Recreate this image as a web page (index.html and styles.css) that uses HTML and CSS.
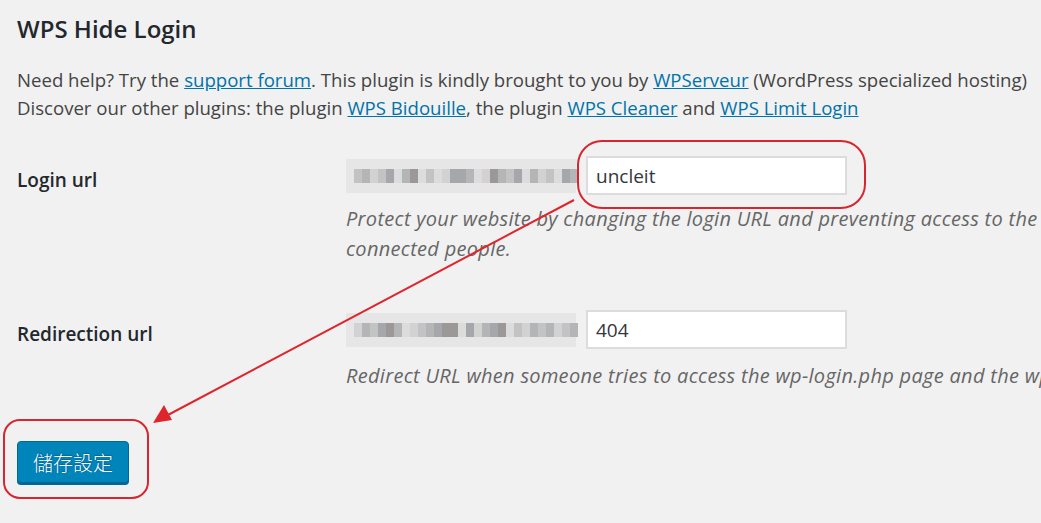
FILE: index.html
```html
<!DOCTYPE html>
<html lang="en">
<head>
<meta charset="utf-8">
<title>WPS Hide Login</title>
<link rel="stylesheet" href="styles.css">
</head>
<body>
<div class="wrap">
  <h2 class="title">WPS Hide Login</h2>
  <p class="intro">Need help? Try the <a href="#">support forum</a>. This plugin is kindly brought to you by <a href="#">WPServeur</a> (WordPress specialized hosting)<br>Discover our other plugins: the plugin <a href="#">WPS Bidouille</a>, the plugin <a href="#">WPS Cleaner</a> and <a href="#">WPS Limit Login</a></p>

  <div class="form-table">
    <div class="row row-login">
      <div class="label">Login url</div>
      <div class="field">
        <div class="inline">
          <span class="blur blur-1">
            <span class="px a"></span><span class="px b"></span><span class="px c"></span><span class="px a"></span><span class="px d"></span><span class="px gap"></span><span class="px b"></span><span class="px e"></span><span class="px gap"></span><span class="px a"></span><span class="px gap"></span><span class="px c"></span><span class="px d"></span><span class="px d"></span><span class="px b"></span><span class="px gap"></span><span class="px c"></span><span class="px e"></span><span class="px b"></span><span class="px a"></span><span class="px d"></span><span class="px gap"></span><span class="px b"></span><span class="px c"></span><span class="px a"></span><span class="px gap"></span><span class="px d"></span><span class="px b"></span>
          </span>
          <input class="text-input" type="text" value="uncleit">
        </div>
        <p class="desc">Protect your website by changing the login URL and preventing access to the wp-login.php page and the wp-admin directory to non-<br>connected people.</p>
      </div>
    </div>

    <div class="row row-redirect">
      <div class="label">Redirection url</div>
      <div class="field">
        <div class="inline">
          <span class="blur blur-2">
            <span class="px c"></span><span class="px b"></span><span class="px a"></span><span class="px d"></span><span class="px e"></span><span class="px b"></span><span class="px gap"></span><span class="px c"></span><span class="px a"></span><span class="px b"></span><span class="px d"></span><span class="px e"></span><span class="px e"></span><span class="px gap"></span><span class="px d"></span><span class="px c"></span><span class="px b"></span><span class="px d"></span><span class="px e"></span><span class="px gap"></span><span class="px a"></span><span class="px c"></span><span class="px b"></span><span class="px a"></span><span class="px b"></span><span class="px c"></span><span class="px a"></span><span class="px b"></span>
          </span>
          <input class="text-input" type="text" value="404">
        </div>
        <p class="desc">Redirect URL when someone tries to access the wp-login.php page and the wp-admin directory while not logged in.</p>
      </div>
    </div>
  </div>

  <p class="submit"><button class="button-primary" type="button">儲存設定</button></p>

  <svg class="annot" width="1041" height="523" viewBox="0 0 1041 523" aria-hidden="true">
    <rect x="578" y="141" width="287" height="67" rx="24" ry="24" fill="none" stroke="#d7262f" stroke-width="2"/>
    <rect x="4" y="420" width="144" height="78" rx="16" ry="16" fill="none" stroke="#d7262f" stroke-width="2"/>
    <line x1="574" y1="200" x2="166" y2="416" stroke="#e0242c" stroke-width="2"/>
    <polygon points="153,423 164,405 172,420" fill="#e0242c"/>
  </svg>
</div>
</body>
</html>
```

FILE: styles.css
```css
html, body {
  margin: 0;
  padding: 0;
  background: #f1f1f1;
  overflow: hidden;
}

body {
  width: 1041px;
  height: 523px;
  font-family: "Open Sans", "Noto Sans", sans-serif;
  font-size: 18.6px;
  color: #444;
}

.wrap {
  position: relative;
  padding: 0 0 0 17px;
  height: 523px;
  overflow: hidden;
}

.title {
  margin: 0;
  padding-top: 13px;
  font-size: 24px;
  font-weight: 600;
  line-height: 32px;
  color: #23282d;
}

.intro {
  margin: 21px 0 0;
  line-height: 28px;
  white-space: nowrap;
}

.intro a {
  color: #0073aa;
  text-decoration: underline;
}

.form-table {
  display: flex;
  flex-direction: column;
}

.row {
  display: flex;
}

.row-login {
  margin-top: 34px;
}

.row-redirect {
  margin-top: 46px;
}

.label {
  width: 329px;
  flex: none;
  font-size: 19px;
  font-weight: 600;
  color: #23282d;
  padding-top: 10px;
  line-height: 28px;
}

.field {
  flex: none;
  width: 1200px;
}

.inline {
  display: flex;
  align-items: center;
  gap: 10px;
}

.blur {
  width: 230px;
  height: 34px;
  background: #e6e6e6;
  display: flex;
  align-items: center;
  padding: 0 8px;
  box-sizing: border-box;
  filter: blur(0.6px);
}

.px {
  width: 8px;
  height: 14px;
  flex: none;
}

.px.a { background: #c3c3c3; }
.px.b { background: #b4b5b7; }
.px.c { background: #d2d2d2; }
.px.d { background: #a6a7aa; }
.px.e { background: #9b9897; }
.px.gap { background: #dcdcdc; }

.text-input {
  width: 261px;
  height: 39px;
  box-sizing: border-box;
  margin: 0;
  padding: 0 8px;
  border: 2px solid #dcdcdc;
  background: #fff;
  font-family: inherit;
  font-size: 19px;
  color: #32373c;
  outline: none;
}

.desc {
  margin: 9px 0 0;
  font-size: 20px;
  letter-spacing: 0.3px;
  font-style: italic;
  color: #666;
  line-height: 30px;
  white-space: nowrap;
}

.row-redirect .desc {
  margin-top: 12px;
}

.submit {
  margin: 50px 0 0;
}

.button-primary {
  width: 112px;
  height: 42px;
  background: #0085ba;
  border: 1px solid #006799;
  border-radius: 4px;
  box-shadow: 0 2px 0 #006799;
  color: #fff;
  font-family: "Noto Sans CJK TC", sans-serif;
  font-size: 20px;
  font-weight: 300;
  text-shadow: 0 -1px 1px #006799, 1px 0 1px #006799;
  padding: 0;
}

.annot {
  position: absolute;
  left: 0;
  top: 0;
  pointer-events: none;
}
```
